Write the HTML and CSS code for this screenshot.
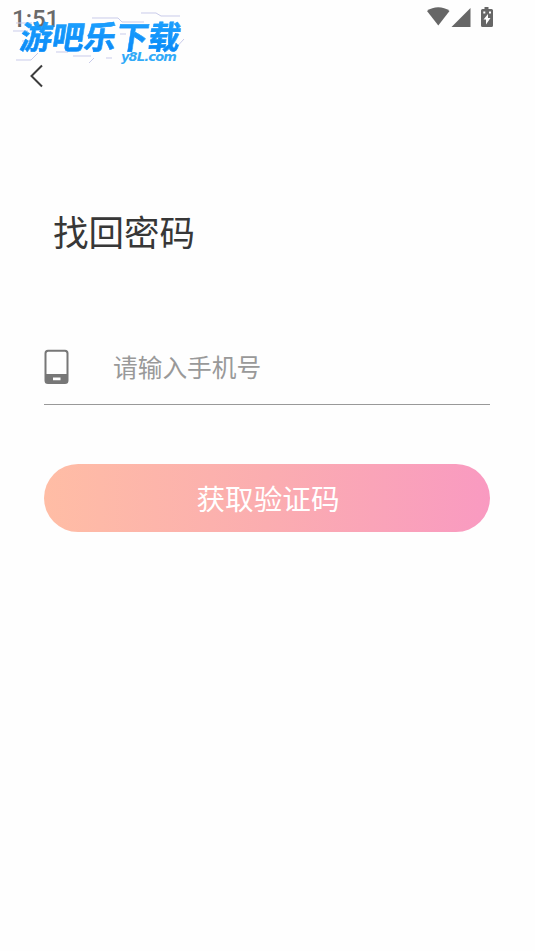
FILE: index.html
```html
<!DOCTYPE html>
<html lang="zh-CN">
<head>
<meta charset="utf-8">
<title>找回密码</title>
<link rel="stylesheet" href="styles.css">
</head>
<body>
<header class="status">
  <span class="clock">1:51</span>
  <svg class="status-icons" width="70" height="24" viewBox="0 0 70 24" fill="#666">
    <path d="M1 11.500C7.500 6.500 17 6.500 23.500 11.500L12.300 26Z" transform="translate(0 -.5)"/>
    <path d="M44.500 8V27H25.500Z"/>
    <path fill-rule="evenodd" d="M58.500 7h4v2h3q1.500 0 1.500 1.500V25.500q0 1.500-1.500 1.500H56.500q-1.500 0-1.500-1.500V10.500Q55 9 56.500 9h2ZM62 14l-4.500 5.500h2.500v5l4.500-6.500h-2.500ZM57.300 11.500h2v2h-2ZM63 11.500h2v2h-2Z"/>
  </svg>
</header>
<div class="watermark">
  <svg class="circuit" width="180" height="60" viewBox="0 0 180 60" fill="none" stroke="#c9cbea" stroke-width="1">
    <path d="M82 10H108L112 14H134M131 5H146L151 8H170M6 15H22M3 23H18M12 33H24M6 52H21L28 45M46 44H58M63 48H81M96 50H102M79 55L84 50M110 26H116M163 43L174 31" />
  </svg>
  <span class="brand">游吧乐下载</span>
  <span class="domain">y8L.com</span>
</div>
<nav class="nav">
  <svg width="16" height="24" viewBox="0 0 16 24" fill="none" stroke="#3c3c3c" stroke-width="2"><path d="M13 1.500L2.500 12L13 22.500"/></svg>
</nav>
<main class="page">
  <h1 class="title">找回密码</h1>
  <div class="field">
    <svg class="phone" width="25" height="36" viewBox="0 0 25 36">
      <path fill="#777" fill-rule="evenodd" d="M4 .8H21Q24.500 .8 24.500 4.300V31.500Q24.500 35 21 35H4Q.5 35 .5 31.500V4.300Q.5 .8 4 .8ZM4.200 2.800Q2.500 2.800 2.500 4.500V25H22.500V4.500Q22.500 2.800 20.800 2.800ZM9 28.500V31.300H16.500V28.500Z"/>
    </svg>
    <span class="placeholder">请输入手机号</span>
  </div>
  <button class="submit">获取验证码</button>
</main>
</body>
</html>
```
FILE: styles.css
```css
* { box-sizing: border-box; }
body {
  margin: 0;
  height: 951px;
  position: relative;
  overflow: hidden;
  background: #fefefe;
  font-family: "Noto Sans CJK SC", sans-serif;
}
.status {
  height: 36px;
  padding: 0 41px 0 12px;
  display: flex;
  justify-content: space-between;
}
.clock {
  font: 500 24px/38px Roboto, sans-serif;
  color: #6a6a6a;
}
.status-icons { height: 24px; overflow: visible; margin-right: -2px; }
.watermark {
  position: absolute;
  left: 10px;
  top: 8px;
  width: 180px;
  height: 60px;
}
.circuit { position: absolute; left: 0; top: 0; }
.brand {
  position: absolute;
  left: 11px;
  top: 7px;
  font-size: 32px;
  line-height: 40px;
  font-weight: 700;
  white-space: nowrap;
  transform: skewX(-9deg);
  background: linear-gradient(#20a5ff, #0787f7);
  background-clip: text;
  -webkit-text-stroke: .4px #1095fb;
  color: transparent;
}
.domain {
  position: absolute;
  left: 111px;
  top: 40px;
  font: italic 700 13px/18px "DejaVu Sans", sans-serif;
  letter-spacing: -.85px;
  color: #31aaf8;
}
.nav { height: 64px; padding: 28px 0 0 29px; }
.nav svg { display: block; }
.page { padding: 105px 45px 0 44px; }
.title {
  margin: 0 0 0 9px;
  font-size: 35.500px;
  line-height: 52px;
  font-weight: 400;
  color: #373737;
}
.field {
  height: 76px;
  margin-top: 72px;
  padding-bottom: 1px;
  border-bottom: 1px solid #999;
  display: flex;
  align-items: center;
  gap: 44px;
}
.phone { margin-top: 2px; }
.placeholder { font-size: 24.700px; line-height: 36px; color: #999; }
.submit {
  display: block;
  width: 100%;
  height: 68px;
  margin-top: 59px;
  padding: 0 0 0 2px;
  border: 0;
  border-radius: 34px;
  background: linear-gradient(90deg, #ffbda5, #fbadb0 50%, #f99ac1);
  color: #fff;
  font: 400 28.600px/68px "Noto Sans CJK SC", sans-serif;
}
```
